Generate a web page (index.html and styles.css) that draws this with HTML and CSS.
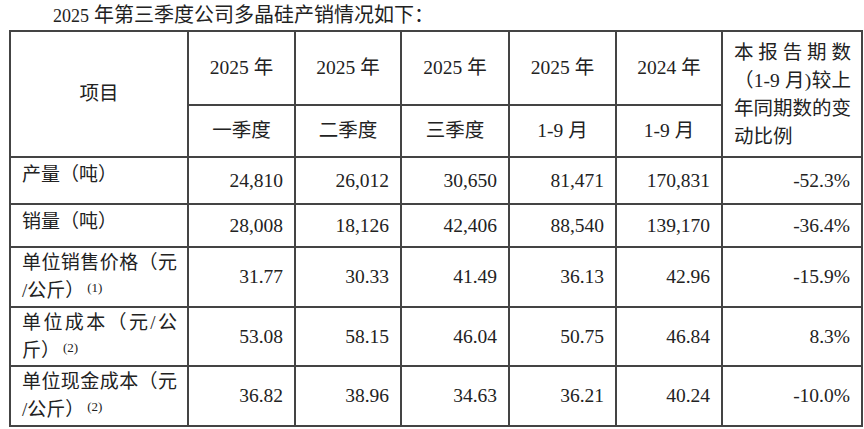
FILE: index.html
```html
<!DOCTYPE html>
<html lang="zh-CN">
<head>
<meta charset="utf-8">
<title>多晶硅产销情况</title>
<link rel="stylesheet" href="styles.css">
</head>
<body>
<p class="title"><span class="title-num">2025</span> 年第三季度公司多晶硅产销情况如下：</p>
<div class="wrap">
<table class="sheet">
  <colgroup>
    <col class="c-label"><col class="c-num"><col class="c-num2"><col class="c-num3"><col class="c-num"><col class="c-num2"><col class="c-chg">
  </colgroup>
  <thead>
    <tr class="h1">
      <th rowspan="2" class="head-item">项目</th>
      <th>2025 年</th>
      <th>2025 年</th>
      <th>2025 年</th>
      <th>2025 年</th>
      <th>2024 年</th>
      <th rowspan="2" class="head-chg">
        <span class="jl">本报告期数</span>
        <span class="jl">（1-9 月)较上</span>
        <span class="jl">年同期数的变</span>
        <span class="ll">动比例</span>
      </th>
    </tr>
    <tr class="h2">
      <th>一季度</th>
      <th>二季度</th>
      <th>三季度</th>
      <th>1-9 月</th>
      <th>1-9 月</th>
    </tr>
  </thead>
  <tbody>
    <tr class="r1">
      <td class="lab">产量（吨）</td>
      <td>24,810</td><td>26,012</td><td>30,650</td><td>81,471</td><td>170,831</td><td>-52.3%</td>
    </tr>
    <tr class="r2">
      <td class="lab">销量（吨）</td>
      <td>28,008</td><td>18,126</td><td>42,406</td><td>88,540</td><td>139,170</td><td>-36.4%</td>
    </tr>
    <tr class="r3">
      <td class="lab lab2"><span class="jl">单位销售价格（元</span><span class="ll">/公斤）<sup class="note">(1)</sup></span></td>
      <td>31.77</td><td>30.33</td><td>41.49</td><td>36.13</td><td>42.96</td><td>-15.9%</td>
    </tr>
    <tr class="r4">
      <td class="lab lab2"><span class="jl">单位成本（元/公</span><span class="ll">斤）<sup class="note">(2)</sup></span></td>
      <td>53.08</td><td>58.15</td><td>46.04</td><td>50.75</td><td>46.84</td><td>8.3%</td>
    </tr>
    <tr class="r5">
      <td class="lab lab2"><span class="jl">单位现金成本（元</span><span class="ll">/公斤）<sup class="note">(2)</sup></span></td>
      <td>36.82</td><td>38.96</td><td>34.63</td><td>36.21</td><td>40.24</td><td>-10.0%</td>
    </tr>
  </tbody>
</table>
</div>
</body>
</html>
```

FILE: styles.css
```css
html, body {
  margin: 0;
  padding: 0;
  background: #ffffff;
}

body {
  font-family: "Liberation Serif", "Noto Sans CJK SC", serif;
  color: #222222;
  width: 864px;
  height: 429px;
  overflow: hidden;
}

.title {
  margin: 0;
  height: 30px;
  line-height: 30px;
  padding-left: 53px;
  font-size: 20px;
  white-space: nowrap;
}

.title-num {
  font-size: 18px;
}

.wrap {
  padding-left: 9px;
}

.sheet {
  border-collapse: collapse;
  table-layout: fixed;
  width: 852px;
  font-size: 19.5px;
}

.c-label { width: 178px; }
.c-num { width: 107px; }
.c-num2 { width: 106px; }
.c-num3 { width: 108px; }
.c-chg { width: 140px; }

.sheet th,
.sheet td {
  border: 2px solid #444444;
  padding: 0;
  font-weight: normal;
}

.sheet th {
  text-align: center;
  vertical-align: middle;
  line-height: 28px;
}

.h1 { height: 74px; }
.h2 { height: 52px; }
.r1 { height: 47px; }
.r2 { height: 43px; }
.r3 { height: 60px; }
.r4 { height: 59px; }
.r5 { height: 60px; }

.head-item {
  padding-top: 6px;
}

.head-chg {
  text-align: left;
  padding: 2px 10px 0 11px !important;
  line-height: 29px;
}

.jl {
  display: block;
  text-align: justify;
  text-align-last: justify;
}

.ll {
  display: block;
  text-align: left;
}

.sheet td {
  text-align: right;
  vertical-align: middle;
  padding-right: 11px;
  line-height: 28px;
}

.sheet td.lab {
  text-align: left;
  vertical-align: top;
  padding: 3px 10px 0 11px;
  font-size: 19px;
}

.sheet td.lab2 {
  padding-top: 1px;
}

.note {
  font-size: 13px;
  vertical-align: 5px;
  line-height: 0;
  margin-left: 3px;
  font-family: "Liberation Serif", serif;
}
```
